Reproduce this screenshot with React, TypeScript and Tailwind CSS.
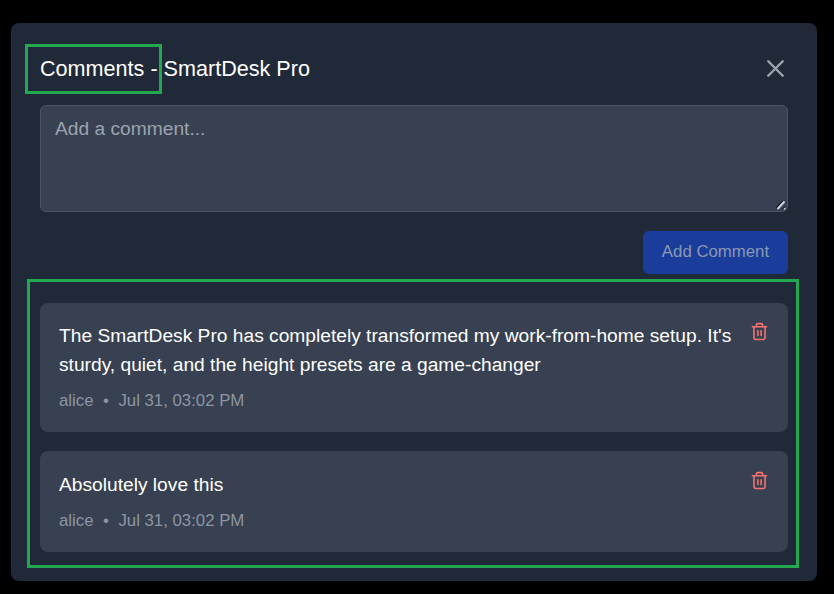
import { Trash2, X } from 'lucide-react';

const comments = [
  {
    id: 1,
    text: "The SmartDesk Pro has completely transformed my work-from-home setup. It's sturdy, quiet, and the height presets are a game-changer",
    user: 'alice',
    date: 'Jul 31, 03:02 PM',
    card: 'h-[129px] pt-[18px]',
  },
  {
    id: 2,
    text: 'Absolutely love this',
    user: 'alice',
    date: 'Jul 31, 03:02 PM',
    card: 'h-[101px] pt-[19px]',
  },
];

export default function App() {
  return (
    <div className="min-h-[594px] bg-black pl-[11px] pr-[17px] pt-[23px] font-['Liberation_Sans',Arial,sans-serif]">
      <div className="relative h-[558px] w-[806px] rounded-lg bg-[#1f2937] px-[29px]">
        {/* Header */}
        <div className="flex h-[82px] items-center justify-between pb-[21px] pt-[29px]">
          <h2 className="pt-[2px] text-[21.6px] leading-[28px] font-normal text-white">Comments - SmartDesk Pro</h2>
          <button className="mr-[-3px] flex h-8 w-8 items-center justify-center text-[#9ca3af]">
            <X size={29} strokeWidth={2} />
          </button>
        </div>
        {/* Highlight over the title */}
        <div className="absolute left-[14px] top-[21px] h-[50px] w-[137px] border-[3px] border-[#22a94f]" />

        <div className="relative">
          <textarea
            placeholder="Add a comment..."
            className="block h-[107px] w-full resize-none rounded-md border border-[#4b5563] bg-[#374151] px-[14px] py-[11px] text-[19.2px] leading-[24px] text-white placeholder:text-[#9ca3af]"
          />
          {/* Resize grip */}
          <svg className="pointer-events-none absolute bottom-[1px] right-[1px]" width="13" height="13" viewBox="0 0 13 13" fill="none">
            <path d="M2 10 L9 3" stroke="#111827" strokeWidth="1.5" />
            <path d="M3.5 11 L10.5 3.5" stroke="#d1d5db" strokeWidth="2" />
            <path d="M8.5 11 L11 8.5" stroke="#111827" strokeWidth="1" />
            <path d="M10 11.5 L11.5 10" stroke="#d1d5db" strokeWidth="1.2" />
          </svg>
        </div>

        <div className="mt-[19px] flex justify-end">
          <button className="h-[43px] w-[145px] rounded-md bg-[#1a3d9b] pb-[2px] text-[16.8px] text-[#8a97b3]">Add Comment</button>
        </div>

        {/* Comment list */}
        <div className="mt-[5px] ml-[-13px] mr-[-11px] flex h-[289px] flex-col gap-[19px] border-[3px] border-[#22a94f] pb-[13px] pl-[10px] pr-[8px] pt-[21px]">
          {comments.map((c) => (
            <div key={c.id} className={`flex items-start justify-between rounded-lg bg-[#374151] pl-[19px] pr-[19px] ${c.card}`}>
              <div className="min-w-0">
                <p className="w-[680px] text-[19.2px] leading-[29px] text-white">{c.text}</p>
                <p className="mt-[12px] text-[16.8px] leading-[20px] text-[#8d95a3]">
                  {c.user}
                  <span className="mx-[9.5px]">•</span>
                  {c.date}
                </p>
              </div>
              <button className="mt-[1px] text-[#f87171]">
                <Trash2 size={19} />
              </button>
            </div>
          ))}
        </div>
      </div>
    </div>
  );
}
